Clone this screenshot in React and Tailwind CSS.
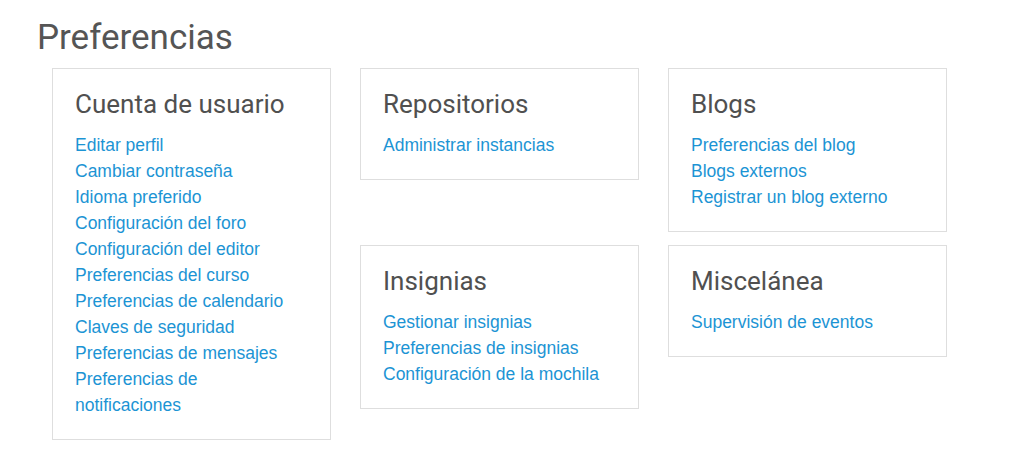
import React from "react";

const linkCls =
  "block text-[17.5px] leading-[26px] text-[#1c94d4] hover:underline";

function Card({ title, links }) {
  return (
    <div className="w-[279px] border border-[#dedede] bg-white px-[22px] pt-5 pb-[21px]">
      <h3
        className="text-[26px] leading-[31px] text-[#505050] mb-3"
        style={{ fontFamily: "Roboto, sans-serif" }}
      >
        {title}
      </h3>
      <div style={{ fontFamily: '"Liberation Sans", Arial, sans-serif' }}>
        {links.map((l) => (
          <a key={l} href="#" className={linkCls}>
            {l}
          </a>
        ))}
      </div>
    </div>
  );
}

export default function App() {
  return (
    <div className="w-[1024px] h-[456px] bg-white overflow-hidden">
      <div className="pl-[37px] pt-[18px]">
        <h2
          className="text-[35px] leading-[40px] text-[#555555]"
          style={{ fontFamily: "Roboto, sans-serif" }}
        >
          Preferencias
        </h2>
      </div>
      <div className="flex items-start gap-[29px] pl-[52px] mt-[10px]">
        <Card
          title="Cuenta de usuario"
          links={[
            "Editar perfil",
            "Cambiar contraseña",
            "Idioma preferido",
            "Configuración del foro",
            "Configuración del editor",
            "Preferencias del curso",
            "Preferencias de calendario",
            "Claves de seguridad",
            "Preferencias de mensajes",
            "Preferencias de notificaciones",
          ]}
        />
        <div className="flex flex-col gap-[13px]">
          <div className="flex items-start gap-[29px]">
            <Card title="Repositorios" links={["Administrar instancias"]} />
            <Card
              title="Blogs"
              links={[
                "Preferencias del blog",
                "Blogs externos",
                "Registrar un blog externo",
              ]}
            />
          </div>
          <div className="flex items-start gap-[29px]">
            <Card
              title="Insignias"
              links={[
                "Gestionar insignias",
                "Preferencias de insignias",
                "Configuración de la mochila",
              ]}
            />
            <Card title="Miscelánea" links={["Supervisión de eventos"]} />
          </div>
        </div>
      </div>
    </div>
  );
}
